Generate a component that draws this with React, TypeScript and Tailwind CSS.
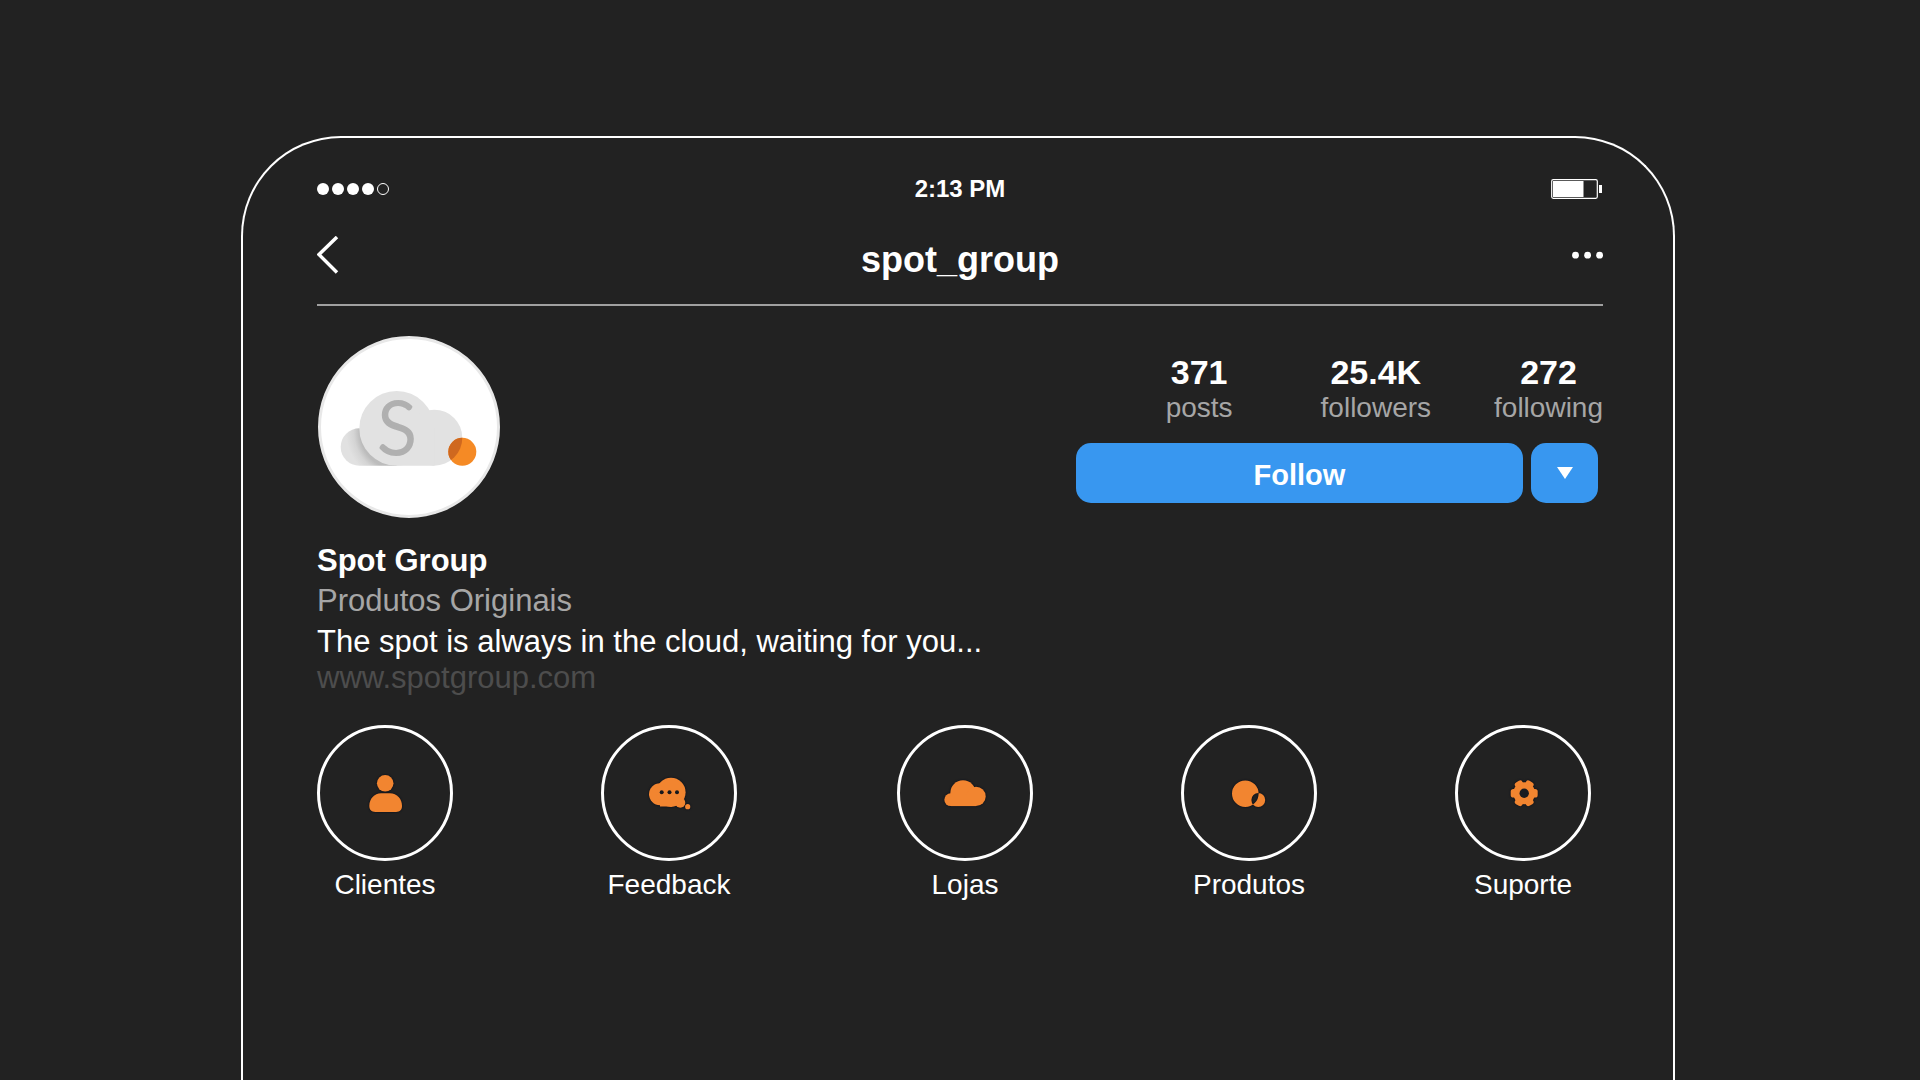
import React from "react";

interface Stat {
  value: string;
  label: string;
  className: string;
}

interface Highlight {
  label: string;
  icon: React.ReactNode;
}

const STATS: Stat[] = [
  { value: "371", label: "posts", className: "mr-[88px]" },
  { value: "25.4K", label: "followers", className: "mr-[63px]" },
  { value: "272", label: "following", className: "" },
];

const HIGHLIGHTS: Highlight[] = [
  {
    label: "Clientes",
    icon: (
      <>
        <circle cx="24.2" cy="14.3" r="8.3" />
        <path d="M20 24.3h9c7 0 12 5.7 12 12.5 0 4-2 6.2-6 6.2H14.3c-4 0-6-2.2-6-6.2 0-6.8 5-12.5 11.7-12.5z" />
      </>
    ),
  },
  {
    label: "Feedback",
    icon: (
      <>
        <circle cx="15" cy="25.3" r="11" />
        <circle cx="26" cy="23.3" r="14.6" />
        <path d="M15 30h12v7.5H15z" />
        <circle cx="35.3" cy="33.7" r="5" />
        <circle cx="42.7" cy="37.7" r="2.6" />
        <g fill="#17181d">
          <circle cx="16.7" cy="23.3" r="2" />
          <circle cx="24.5" cy="23.3" r="2" />
          <circle cx="32" cy="23.3" r="2" />
        </g>
      </>
    ),
  },
  {
    label: "Lojas",
    icon: (
      <>
        <circle cx="9.7" cy="30.7" r="6.4" />
        <circle cx="22" cy="24" r="12.7" />
        <circle cx="35" cy="27.4" r="9.7" />
        <path d="M9.7 27H35v10.1H9.7z" />
      </>
    ),
  },
  {
    label: "Produtos",
    icon: (
      <path
        fillRule="evenodd"
        d="M7 24.7a13.3 13.3 0 1 0 26.6 0a13.3 13.3 0 1 0-26.6 0zM26.4 31a6.9 6.9 0 1 0 13.8 0a6.9 6.9 0 1 0-13.8 0z"
      />
    ),
  },
  {
    label: "Suporte",
    icon: (
      <>
        <circle cx="25.2" cy="24.3" r="11" />
        <rect x="11.7" y="20.1" width="27" height="8.4" rx="2.6" />
        <rect x="11.7" y="20.1" width="27" height="8.4" rx="2.6" transform="rotate(60 25.2 24.3)" />
        <rect x="11.7" y="20.1" width="27" height="8.4" rx="2.6" transform="rotate(120 25.2 24.3)" />
        <circle cx="25.2" cy="24.3" r="4.7" fill="#1b1c20" />
      </>
    ),
  },
];

const StatusBar: React.FC = () => (
  <div className="grid grid-cols-[1fr_auto_1fr] items-center h-[30px]">
    <div className="flex gap-[3px]">
      <span className="size-3 rounded-full bg-white" />
      <span className="size-3 rounded-full bg-white" />
      <span className="size-3 rounded-full bg-white" />
      <span className="size-3 rounded-full bg-white" />
      <span className="size-3 rounded-full border border-white" />
    </div>
    <time className="text-[24px] leading-[30px] font-bold">2:13 PM</time>
    <svg className="justify-self-end" width="52" height="20" viewBox="0 0 52 20" fill="none">
      <rect x="0.7" y="0.7" width="45.6" height="18.6" rx="1.5" stroke="white" strokeWidth="1.2" />
      <path d="M2 2h30.5v16H2z" fill="white" />
      <path d="M48 6h3v8h-3z" fill="white" />
    </svg>
  </div>
);

const NavBar: React.FC = () => (
  <header className="grid grid-cols-[1fr_auto_1fr] items-start mt-8 pb-6 border-b-2 border-[#a0a0a0]">
    <button type="button" aria-label="Back" className="justify-self-start">
      <svg width="22" height="38" viewBox="0 0 22 38" fill="none">
        <path d="M20 1L2 18.6L20 36.5" stroke="white" strokeWidth="3.5" />
      </svg>
    </button>
    <h1 className="pt-1 text-[36px] leading-10 font-bold">spot_group</h1>
    <button type="button" aria-label="More options" className="justify-self-end">
      <svg width="34" height="38" viewBox="0 0 34 38" fill="white">
        <circle cx="6.5" cy="19.2" r="3.4" />
        <circle cx="18.6" cy="19.2" r="3.4" />
        <circle cx="30.6" cy="19.2" r="3.4" />
      </svg>
    </button>
  </header>
);

const Avatar: React.FC = () => (
  <svg className="ml-px shrink-0" width="182" height="182" viewBox="0 0 182 182" role="img" aria-label="Spot Group">
    <defs>
      <radialGradient id="cloudShade" gradientUnits="userSpaceOnUse" cx="79" cy="96" r="60">
        <stop offset="0.62" stopColor="#bcbcbc" />
        <stop offset="0.72" stopColor="#d4d4d4" />
        <stop offset="0.85" stopColor="#e1e1e1" />
      </radialGradient>
      <clipPath id="cloudEdge">
        <circle cx="116.3" cy="101.7" r="28" />
      </clipPath>
    </defs>
    <circle cx="91" cy="91" r="89.5" fill="white" stroke="#e8e8e8" strokeWidth="3" />
    <path d="M41.4 92.3a18.7 18.7 0 0 0 0 37.4H79V92.3z" fill="url(#cloudShade)" />
    <g fill="#e2e2e2">
      <circle cx="78.7" cy="92.4" r="37.4" />
      <circle cx="116.3" cy="101.7" r="28" />
      <path d="M78.7 92h37.6v37.7H78.7z" />
    </g>
    <text
      x="79"
      y="118"
      textAnchor="middle"
      fill="#b0b0b0"
      stroke="#b0b0b0"
      strokeWidth="3"
      strokeLinejoin="round"
      className="font-['Lato',sans-serif] text-[72px] font-light"
    >
      S
    </text>
    <circle cx="144.3" cy="115.8" r="14" fill="#f58a25" />
    <circle cx="144.3" cy="115.8" r="14" fill="#cf681f" clipPath="url(#cloudEdge)" />
  </svg>
);

const ProfileActions: React.FC = () => (
  <div className="w-[527px] pt-[18px]">
    <dl className="flex justify-end text-center">
      {STATS.map((stat) => (
        <div key={stat.label} className={`flex flex-col-reverse ${stat.className}`}>
          <dt className="text-[28px] leading-9 text-[#a6a6a6]">{stat.label}</dt>
          <dd className="text-[34px] leading-9 font-bold">{stat.value}</dd>
        </div>
      ))}
    </dl>
    <div className="flex gap-2 mt-[17px] mr-[5px]">
      <button
        type="button"
        className="flex-1 h-[60px] pt-1 rounded-[15px] bg-[#3897f0] text-[29px] leading-9 font-bold"
      >
        Follow
      </button>
      <button
        type="button"
        aria-label="Similar accounts"
        className="flex items-center justify-center w-[67px] h-[60px] rounded-[15px] bg-[#3897f0]"
      >
        <svg width="16" height="12" viewBox="0 0 16 12" fill="white">
          <path d="M0 0h16L8 12z" />
        </svg>
      </button>
    </div>
  </div>
);

const Bio: React.FC = () => (
  <section className="mt-[23px] text-[31px]">
    <h2 className="leading-10 font-bold">Spot Group</h2>
    <p className="leading-10 text-[#a6a6a6]">Produtos Originais</p>
    <p className="leading-[42px]">The spot is always in the cloud, waiting for you...</p>
    <a href="#website" className="block w-fit leading-[30px] text-[#4d4d4d]">
      www.spotgroup.com
    </a>
  </section>
);

const Highlights: React.FC = () => (
  <nav className="grid grid-cols-[284fr_296fr_284fr_274fr_148fr] justify-items-start mt-8">
    {HIGHLIGHTS.map((highlight) => (
      <button key={highlight.label} type="button" className="flex flex-col items-center gap-[6px]">
        <span className="flex items-center justify-center size-[136px] rounded-full border-3 border-white">
          <svg
            className="drop-shadow-[0_0_1px_#050a18]"
            width="48"
            height="48"
            viewBox="0 0 48 48"
            fill="#f28530"
          >
            {highlight.icon}
          </svg>
        </span>
        <span className="text-[28px] leading-9">{highlight.label}</span>
      </button>
    ))}
  </nav>
);

const App: React.FC = () => {
  return (
    <div className="flex min-h-screen bg-[#222222] pt-[136px] pl-[241px] pr-[245px] font-['Liberation_Sans',Arial,sans-serif] text-white">
      <main className="flex-1 rounded-t-[100px] border-2 border-b-0 border-white pt-9 pl-[74px] pr-[70px]">
        <StatusBar />
        <NavBar />
        <section className="flex justify-between items-start mt-[30px]">
          <Avatar />
          <ProfileActions />
        </section>
        <Bio />
        <Highlights />
      </main>
    </div>
  );
};

export default App;
